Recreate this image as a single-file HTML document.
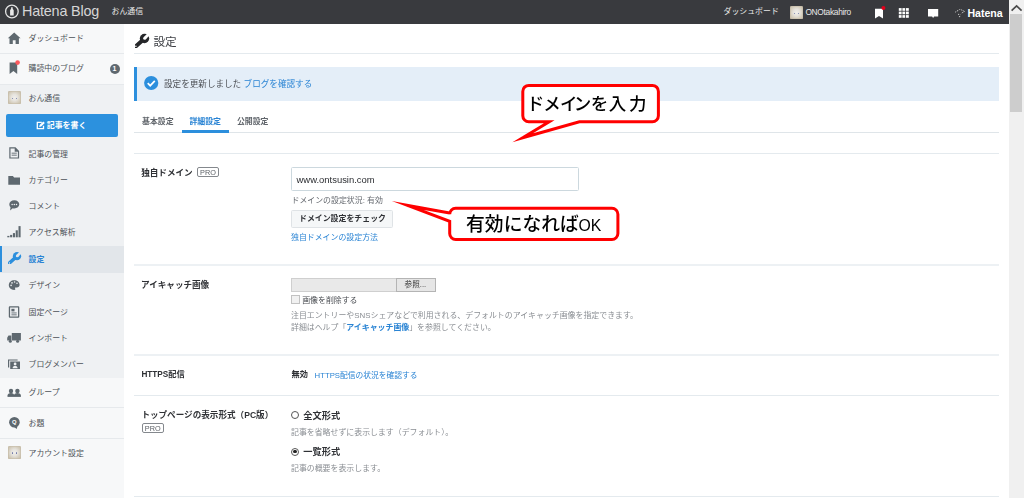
<!DOCTYPE html>
<html lang="ja">
<head>
<meta charset="utf-8">
<title>設定 - はてなブログ</title>
<style>
html,body{margin:0;padding:0;}
body{filter:blur(0.42px);width:1024px;height:498px;overflow:hidden;background:#fff;position:relative;
  font-family:"Liberation Sans","Noto Sans CJK JP",sans-serif;color:#3d3f44;}
.abs{position:absolute;}
.t{position:absolute;white-space:nowrap;line-height:12px;height:12px;font-size:7.92px;}
.b{font-weight:bold;}
.hl{position:absolute;height:1px;background:#e4eaee;left:134px;width:865px;}
a{color:#2a84d4;text-decoration:none;}
/* header */
#gh{left:0;top:0;width:1009px;height:24px;background:#393a3e;}
#gh .t{color:#e8e8e8;}
/* sidebar */
#sb{left:0;top:24px;width:124px;height:474px;background:#f7f8f9;}
#sbdark{left:0;top:84px;width:124px;height:294px;background:#eff1f3;}
.sdiv{position:absolute;left:0;width:124px;height:1px;background:#e6e9ec;}
.si{color:#4d5258;left:28.5px;}
/* scrollbar */
#sc{left:1009px;top:0;width:15px;height:498px;background:#f0f0f0;}
#th{left:1010px;top:14px;width:12px;height:98px;background:#cdcdcd;}
</style>
</head>
<body>

<!-- ===== global header ===== -->
<div id="gh" class="abs">
  <svg class="abs" style="left:4px;top:4px" width="16" height="16" viewBox="0 0 16 16">
    <circle cx="7.900" cy="7.500" r="6.300" fill="none" stroke="#e4e4e4" stroke-width="1.300"/>
    <path d="M7.1 3.2h1.6v1.6l1 1.5v5.2h-3.6v-5.2l1-1.5z" fill="#e9e9e9"/>
  </svg>
  <span class="t" id="hblog" style="left:22px;top:3.400px;font-size:14.400px;line-height:16px;height:16px;letter-spacing:-0.200px;color:#d6d6d6">Hatena Blog</span>
  <span class="t" style="left:111.5px;top:6.3px;font-size:7.92px">おん通信</span>
  <span class="t" style="left:723.500px;top:6.200px;font-size:7.920px">ダッシュボード</span>
  <div class="abs av" style="left:790px;top:6px"></div>
  <span class="t" id="huser" style="left:805.400px;top:6.100px;font-size:8.400px;letter-spacing:-0.300px">ONOtakahiro</span>
  <!-- bookmark -->
  <svg class="abs" style="left:872px;top:4px" width="16" height="16" viewBox="0 0 16 16">
    <path d="M3 4.7h8v9.8l-4-2.6l-4 2.6z" fill="#fff"/>
    <circle cx="11.4" cy="3.9" r="2" fill="#e3001b"/>
  </svg>
  <!-- grid -->
  <svg class="abs" style="left:898px;top:7px" width="12" height="12" viewBox="0 0 12 12">
    <g fill="#fff">
      <rect x="0.8" y="1.1" width="2.8" height="2.7"/><rect x="4.4" y="1.1" width="2.8" height="2.7"/><rect x="8" y="1.1" width="2.8" height="2.7"/>
      <rect x="0.8" y="4.6" width="2.8" height="2.7"/><rect x="4.4" y="4.6" width="2.8" height="2.7"/><rect x="8" y="4.6" width="2.8" height="2.7"/>
      <rect x="0.8" y="8.1" width="2.8" height="2.7"/><rect x="4.4" y="8.1" width="2.8" height="2.7"/><rect x="8" y="8.1" width="2.8" height="2.7"/>
    </g>
  </svg>
  <!-- speech -->
  <svg class="abs" style="left:927px;top:7px" width="13" height="12" viewBox="0 0 13 12">
    <path d="M1 1.9h10.2v7.5h-4.1l-1 1.5l-1-1.5h-4.1z" fill="#fff"/>
  </svg>
  <!-- hatena -->
  <svg class="abs" style="left:954px;top:7px" width="12" height="12" viewBox="0 0 12 12">
    <path d="M1.2 5.2l4.2-2.6h1.4l3.8 1.8l-2.8 1.6" fill="none" stroke="#c9c9c9" stroke-width="1" stroke-dasharray="1.2 0.9"/>
    <path d="M4 7.3l2.4 0.4" fill="none" stroke="#c9c9c9" stroke-width="1" stroke-dasharray="1.2 0.9"/>
    <circle cx="5.6" cy="9.6" r="0.7" fill="#c9c9c9"/>
  </svg>
  <span class="t b" id="hhat" style="left:967.500px;top:6.900px;font-size:10.600px;color:#fff;letter-spacing:-0.050px">Hatena</span>
</div>

<!-- ===== scrollbar ===== -->
<div id="sc" class="abs"></div>
<div id="th" class="abs"></div>
<svg class="abs" style="left:1009px;top:0" width="15" height="14" viewBox="0 0 15 14">
  <path d="M2.600 10.700l5-4.700l5 4.700" fill="none" stroke="#4a4a4a" stroke-width="1.700"/>
</svg>

<!-- ===== sidebar ===== -->
<div id="sb" class="abs"></div>
<div id="sbdark" class="abs"></div>
<div class="sdiv" style="top:53px"></div>
<div class="sdiv" style="top:84px"></div>
<div class="sdiv" style="top:407px"></div>
<div class="sdiv" style="top:438px"></div>
<div class="abs" style="left:0;top:246px;width:124px;height:26.5px;background:#e2e6ea"></div>
<div class="abs" style="left:0;top:245.800px;width:2px;height:26.500px;background:#2c8fdd"></div>

<span class="t si" style="top:32.8px">ダッシュボード</span>
<span class="t si" style="top:62.8px">購読中のブログ</span>
<span class="t si" style="top:92.5px">おん通信</span>
<span class="t si" style="top:148.5px">記事の管理</span>
<span class="t si" style="top:175.1px">カテゴリー</span>
<span class="t si" style="top:200.7px">コメント</span>
<span class="t si" style="top:227.4px">アクセス解析</span>
<span class="t si b" style="top:253.800px;color:#2a84d4">設定</span>
<span class="t si" style="top:280.0px">デザイン</span>
<span class="t si" style="top:306.5px">固定ページ</span>
<span class="t si" style="top:332.8px">インポート</span>
<span class="t si" style="top:359.1px">ブログメンバー</span>
<span class="t si" style="top:387.1px">グループ</span>
<span class="t si" style="top:417.5px">お題</span>
<span class="t si" style="top:448.0px">アカウント設定</span>

<!-- badge -->
<div class="abs" style="left:109.5px;top:63.5px;width:10px;height:10px;border-radius:5px;background:#5f686f"></div>
<span class="t b" style="left:112.6px;top:62.5px;font-size:7px;color:#fff">1</span>

<!-- write button -->
<div class="abs" style="left:5.5px;top:114.3px;width:112px;height:23px;background:#2c91de;border-radius:2px"></div>
<svg class="abs" style="left:36px;top:121px" width="9" height="9" viewBox="0 0 9 9">
  <path d="M5.800 1.400H1.300v6.300h6.200V4.800" fill="none" stroke="#fff" stroke-width="1.300"/>
  <path d="M3.100 6l0.500-2l3.700-3.600l1.500 1.500l-3.700 3.600z" fill="#fff"/>
</svg>
<span class="t b" style="left:46.8px;top:119.900px;font-size:7.920px;color:#fff">記事を書く</span>

<!-- sidebar icons -->
<svg id="icons" class="abs" style="left:0;top:24px" width="30" height="474" viewBox="0 24 30 474">
  <g fill="#5e686f">
    <!-- home -->
    <path d="M14.200 32.600l6.400 5.700h-1.700v5.600h-3.300v-3.600h-2.800v3.600h-3.300v-5.600h-1.700z"/>
    <!-- bookmark -->
    <path d="M9.600 62.400h7.600v11.600l-3.800-2.900l-3.800 2.900z"/>
    <circle cx="17.600" cy="62.600" r="2.300" fill="#fb5a5f"/>
    <!-- doc -->
    <path d="M9.300 147.300h6.200l3.600 3.600v7.700h-9.800z M10.500 148.500v8.900h7.400v-5.700h-3.200v-3.200z" fill-rule="evenodd"/>
    <rect x="11.600" y="152.700" width="5.200" height="0.900"/><rect x="11.600" y="154.700" width="5.200" height="0.900"/>
    <!-- folder -->
    <path d="M8.300 176.100h4.600l1.200 1.300h5.900v7.400h-11.700z"/>
    <!-- comment -->
    <path d="M14.300 200.200c2.900 0 5 1.800 5 4.100s-2.100 4.100-5 4.100c-0.600 0-1.100-0.100-1.600-0.200l-2.600 2.300l0.400-3.200c-0.800-0.800-1.200-1.800-1.200-3c0-2.300 2.100-4.100 5-4.100z"/>
    <g fill="#eff1f3"><circle cx="12.100" cy="204.400" r="0.750"/><circle cx="14.300" cy="204.400" r="0.750"/><circle cx="16.500" cy="204.400" r="0.750"/></g>
    <!-- bars -->
    <rect x="7.300" y="235.900" width="2.100" height="1.400"/><rect x="10.100" y="234.900" width="2.100" height="2.400"/><rect x="12.900" y="233.100" width="2.100" height="4.200"/><rect x="15.700" y="230.300" width="2.100" height="7"/><rect x="18.500" y="226.100" width="2.100" height="11.200"/>
    <!-- palette -->
    <path d="M14.200 280.200c3.100 0 5.400 2 5.400 4.600c0 1.700-1.200 2.700-2.700 2.700h-1.200c-0.700 0-1 0.700-0.500 1.300c0.500 0.700 0.100 1.200-1 1.200c-3.100 0-5.400-2.100-5.400-4.900c0-2.800 2.300-4.900 5.400-4.900z"/>
    <g fill="#eff1f3"><circle cx="11.100" cy="285.400" r="0.800"/><circle cx="12" cy="282.900" r="0.800"/><circle cx="14.600" cy="282" r="0.800"/><circle cx="17" cy="283.300" r="0.800"/></g>
    <!-- page -->
    <path d="M9.800 306.300h8.500a1 1 0 0 1 1 1v9.400a1 1 0 0 1-1 1h-8.500a1 1 0 0 1-1-1v-9.400a1 1 0 0 1 1-1z M10.100 307.600v8.800h7.900v-8.800z" fill-rule="evenodd"/>
    <rect x="11.400" y="308.800" width="3.100" height="2.600"/><rect x="11.400" y="312.500" width="5.300" height="0.900"/><rect x="11.400" y="314.400" width="5.300" height="0.900"/>
    <!-- truck -->
    <path d="M11.800 333h9.100v7.400h-9.100z M8.500 335.400h2.800v5h-4.100v-2.600z"/>
    <circle cx="10.300" cy="341.300" r="1.500"/><circle cx="17.600" cy="341.300" r="1.500"/>
    <!-- member -->
    <path d="M8 359.400h9.600v1.200h-8.400v6.800h-1.200z M10.200 361.400h9.800v7.700h-9.800z"/>
    <circle cx="15.100" cy="364" r="1.400" fill="#eff1f3"/><path d="M12.600 368.200c0-1.700 1.100-2.300 2.500-2.300s2.500 0.600 2.500 2.300z" fill="#eff1f3"/>
    <!-- group -->
    <circle cx="11" cy="391" r="2.200"/><circle cx="17.400" cy="391" r="2.200"/>
    <path d="M7.500 396c0-2 1.500-2.900 3.500-2.900s3.200 0.900 3.200 2.900z M13.900 396c0-2 1.500-2.900 3.500-2.900s3.500 0.900 3.500 2.900z"/>
    <rect x="7.500" y="395.700" width="13.400" height="1.200"/>
    <!-- odai -->
    <circle cx="14.400" cy="422.300" r="5.300"/>
    <path d="M14.200 427l3.200-0.600l-0.700 2.600z"/>
  </g>
  <!-- wrench (active, blue) -->
  <g transform="translate(6.900 251.300) scale(0.880)">
  <defs><mask id="wm2"><rect x="-1" y="-1" width="19" height="18" fill="#fff"/><path d="M12.760 6.360L18.420 0.700L16.300 -1.420L10.640 4.240z" fill="#000"/><circle cx="11.700" cy="5.300" r="1.500" fill="#000"/><circle cx="2.900" cy="13.300" r="0.750" fill="#000"/></mask></defs>
  <g mask="url(#wm2)" fill="#2c8fdd" stroke="#2c8fdd">
    <circle cx="11.500" cy="5.500" r="4.700" stroke="none"/>
    <path d="M2.900 13.300L9.600 7.200" stroke-width="3.900" stroke-linecap="round" fill="none"/>
  </g>
  </g>
</svg>
<span class="t b" style="left:11.900px;top:416.100px;font-size:5.800px;color:#fff">Q</span>
<!-- avatars -->
<div class="abs av" style="left:8px;top:91px"></div>
<div class="abs av" style="left:8px;top:445.500px"></div>
<style>
.av{width:13px;height:13px;border-radius:1.500px;background:radial-gradient(ellipse at 50% 50%,#efeeec 0,#e6e3dd 35%,#d3cbba 70%,#c2b8a2 100%);box-shadow:inset 0 0 0 0.600px #c6bca8;}
.av:before,.av:after{content:"";position:absolute;top:6.600px;width:1.600px;height:1.600px;border-radius:50%;background:#6f78a8;}
.av:before{left:3.700px}.av:after{left:7.500px}
</style>

<!-- ===== main ===== -->
<div id="main">
<!-- title -->
<svg class="abs" style="left:133.400px;top:33px" width="17" height="16" viewBox="0 0 17 16">
  <defs><mask id="wm1"><rect x="-1" y="-1" width="19" height="18" fill="#fff"/><path d="M12.760 6.360L18.420 0.700L16.300 -1.420L10.640 4.240z" fill="#000"/><circle cx="11.700" cy="5.300" r="1.500" fill="#000"/><circle cx="2.900" cy="13.300" r="0.750" fill="#000"/></mask></defs>
  <g mask="url(#wm1)" fill="#26272a" stroke="#26272a">
    <circle cx="11.500" cy="5.500" r="4.700" stroke="none"/>
    <path d="M2.900 13.300L9.600 7.200" stroke-width="3.900" stroke-linecap="round" fill="none"/>
  </g>
</svg>
<span class="t" style="left:153.500px;top:33.600px;font-size:11.600px;line-height:16px;height:16px;color:#3d3f44">設定</span>
<div class="hl" style="top:53px"></div>

<!-- notice -->
<div class="abs" style="left:134px;top:67px;width:865px;height:33.500px;background:#e4eef8"></div>
<div class="abs" style="left:134px;top:67px;width:3px;height:33.500px;background:#2c8fdd"></div>
<svg class="abs" style="left:143px;top:75.200px" width="16" height="16" viewBox="0 0 16 16">
  <circle cx="8.200" cy="8" r="7.100" fill="#2c8fdd"/>
  <path d="M4.700 8.200l2.500 2.500l4.600-4.800" fill="none" stroke="#fff" stroke-width="1.700"/>
</svg>
<span class="t" style="left:164px;top:77.500px;font-size:8.580px;color:#4a4d52">設定を更新しました <a>ブログを確認する</a></span>

<!-- tabs -->
<span class="t b" style="left:142px;top:115.600px;color:#60656b">基本設定</span>
<span class="t b" style="left:189.400px;top:115.600px;color:#2a84d4">詳細設定</span>
<span class="t b" style="left:236.900px;top:115.600px;color:#60656b">公開設定</span>
<div class="hl" style="top:132px;background:#dfe5e9"></div>
<div class="abs" style="left:181.600px;top:129.500px;width:47.400px;height:3px;background:#2c8fdd"></div>

<div class="hl" style="top:152.600px"></div>

<!-- row 1: domain -->
<span class="t b" style="left:141.200px;top:166.700px;font-size:8.580px;color:#2f3135">独自ドメイン</span>
<span class="pro" style="left:197.200px;top:167.400px">PRO</span>
<div class="abs" style="left:291px;top:167.400px;width:285.500px;height:21.300px;border:1px solid #ccd8de;border-radius:1.500px;background:#fff"></div>
<span class="t" style="left:296.500px;top:173.700px;font-size:9.450px;color:#2a2c30">www.ontsusin.com</span>
<span class="t" style="left:291.500px;top:195px;color:#666a70">ドメインの設定状況: 有効</span>
<div class="abs" style="left:291px;top:209.600px;width:100.400px;height:16.700px;border:1px solid #dfe3e6;border-radius:1.500px;background:#f5f7f8"></div>
<span class="t b" style="left:299px;top:213.400px;font-size:7.920px;color:#2f3135">ドメイン設定をチェック</span>
<span class="t" style="left:291px;top:232.100px"><a>独自ドメインの設定方法</a></span>

<div class="hl" style="top:264px;height:2px;background:#edf1f4"></div>

<!-- row 2: eyecatch -->
<span class="t b" style="left:141px;top:278.700px;font-size:8.580px;color:#2f3135">アイキャッチ画像</span>
<div class="abs" style="left:291px;top:278.400px;width:104.400px;height:11.800px;border:1px solid #cfcfcf;background:#e9e9e9"></div>
<div class="abs" style="left:396.300px;top:278.400px;width:38px;height:11.800px;border:1px solid #b4b4b4;background:#e6e6e6"></div>
<span class="t" style="left:404.600px;top:278.700px;font-size:7.600px;color:#333">参照...</span>
<div class="abs" style="left:291.300px;top:295.300px;width:7px;height:7px;border:1px solid #c2c2c2;background:#f1f1f1"></div>
<span class="t" style="left:302.200px;top:294.900px;color:#4a4d52">画像を削除する</span>
<span class="t" style="left:291px;top:309.800px;color:#8a8e93">注目エントリーやSNSシェアなどで利用される、デフォルトのアイキャッチ画像を指定できます。</span>
<span class="t" style="left:291px;top:321.900px;color:#8a8e93">詳細はヘルプ「<a class="b">アイキャッチ画像</a>」を参照してください。</span>

<div class="hl" style="top:354px;height:2px;background:#edf1f4"></div>

<!-- row 3: secure delivery -->
<span class="t b" style="left:141.400px;top:369.100px;font-size:8.200px;color:#2f3135">HTTPS配信</span>
<span class="t b" style="left:291.500px;top:369.100px;font-size:8.200px;color:#2f3135">無効</span>
<span class="t" style="left:314.600px;top:370px;font-size:7.750px"><a>HTTPS配信の状況を確認する</a></span>

<div class="hl" style="top:395px"></div>

<!-- row 4: top page -->
<span class="t b" style="left:141.400px;top:409.200px;font-size:8.580px;color:#2f3135">トップページの表示形式（PC版）</span>
<span class="pro" style="left:142px;top:423.300px">PRO</span>
<div class="abs radio" style="left:291.100px;top:410.800px"></div>
<span class="t b" style="left:303.200px;top:410.100px;font-size:9.240px;color:#2f3135">全文形式</span>
<span class="t" style="left:291px;top:427.100px;color:#8a8e93">記事を省略せずに表示します（デフォルト）。</span>
<div class="abs radio on" style="left:291.100px;top:447.700px"></div>
<span class="t b" style="left:303.200px;top:446.400px;font-size:9.240px;color:#2f3135">一覧形式</span>
<span class="t" style="left:291px;top:463px;color:#8a8e93">記事の概要を表示します。</span>

<div class="hl" style="top:496px"></div>

<!-- ===== callouts ===== -->
<svg class="abs" style="left:380px;top:75px" width="300" height="180" viewBox="380 75 300 180">
  <g fill="#fff" stroke="#f00" stroke-width="3" stroke-linejoin="miter" stroke-miterlimit="30">
    <path d="M528.800 85.400h123.600a6 6 0 0 1 6 6v24.300a6 6 0 0 1-6 6H579.400L522.700 137.700L549.200 121.700H528.800a6 6 0 0 1-6-6v-24.300a6 6 0 0 1 6-6z"/>
    <path d="M455.700 208.200h156.200a6 6 0 0 1 6 6v19.300a6 6 0 0 1-6 6h-156.200a6 6 0 0 1-6-6V221.400L407.400 205.400L449.700 212.900V214.200a6 6 0 0 1 6-6z"/>
  </g>
  <g font-family="'Liberation Sans','Noto Sans CJK JP',sans-serif" fill="#000" font-weight="500">
    <text x="526.700 543.200 560 573.700 590.800 608.800 628.900" y="110.200" font-size="17.500">ドメインを入力</text>
    <text x="466.100" y="231.200" font-size="18.800">有効になれば<tspan font-size="17" dx="-0.200" textLength="22.800" lengthAdjust="spacingAndGlyphs">OK</tspan></text>
  </g>
</svg>
<style>
.pro{position:absolute;box-sizing:border-box;width:21.500px;height:10px;border:1px solid #84888d;border-radius:2px;font-size:7.300px;line-height:9px;text-align:center;color:#5d6167;letter-spacing:0}
.radio{width:6.200px;height:6.200px;border:0.900px solid #555;border-radius:50%;background:#fff}
.radio.on:after{content:"";position:absolute;left:1.400px;top:1.400px;width:3.400px;height:3.400px;border-radius:50%;background:#222}
</style>
</div>

</body>
</html>
